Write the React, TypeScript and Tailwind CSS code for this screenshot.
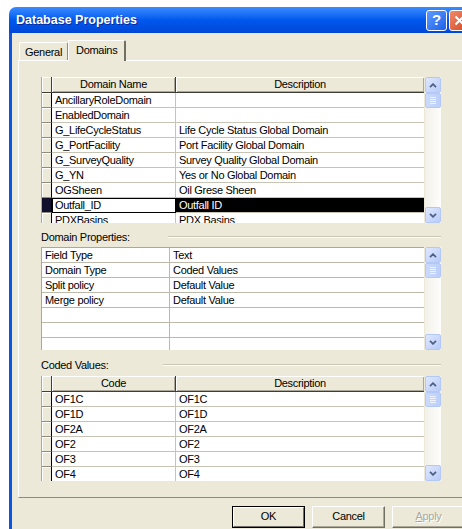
import React from 'react'

type Row = [string, string]

const DOMAINS: Row[] = [
  ['AncillaryRoleDomain', ''],
  ['EnabledDomain', ''],
  ['G_LifeCycleStatus', 'Life Cycle Status Global Domain'],
  ['G_PortFacility', 'Port Facility Global Domain'],
  ['G_SurveyQuality', 'Survey Quality Global Domain'],
  ['G_YN', 'Yes or No Global Domain'],
  ['OGSheen', 'Oil Grese Sheen'],
  ['Outfall_ID', 'Outfall ID'],
  ['PDXBasins', 'PDX Basins'],
]

const PROPS: Row[] = [
  ['Field Type', 'Text'],
  ['Domain Type', 'Coded Values'],
  ['Split policy', 'Default Value'],
  ['Merge policy', 'Default Value'],
  ['', ''],
  ['', ''],
  ['', ''],
]

const CODES: Row[] = [
  ['OF1C', 'OF1C'],
  ['OF1D', 'OF1D'],
  ['OF2A', 'OF2A'],
  ['OF2', 'OF2'],
  ['OF3', 'OF3'],
  ['OF4', 'OF4'],
]

function Chevron({ up }: { up?: boolean }) {
  return (
    <svg width="8" height="5" viewBox="0 0 8 5">
      <polyline
        points={up ? '1,4.2 4,1.2 7,4.2' : '1,0.8 4,3.8 7,0.8'}
        fill="none"
        stroke="#4d6185"
        strokeWidth="1.8"
      />
    </svg>
  )
}

function ArrowBtn({ up }: { up?: boolean }) {
  return (
    <div className="flex h-[16px] w-[16px] shrink-0 items-center justify-center rounded-[2px] border border-[#b4c8f6] bg-gradient-to-br from-[#dfe8fe] to-[#b8cbf8]">
      <Chevron up={up} />
    </div>
  )
}

function Thumb() {
  return (
    <div className="flex h-[15px] w-[16px] shrink-0 flex-col items-center justify-center gap-[1px] rounded-[2px] border border-[#b4c8f6] bg-gradient-to-r from-[#cbdafc] to-[#bccff9]">
      {[0, 1, 2, 3].map((i) => (
        <div key={i} className="h-px w-[6px] bg-[#eef3fe]" />
      ))}
    </div>
  )
}

function ScrollBar() {
  return (
    <div className="ml-[1px] flex w-[16px] shrink-0 flex-col bg-gradient-to-r from-[#f2f0e8] to-[#fefefd]">
      <ArrowBtn up />
      <Thumb />
      <div className="flex-1" />
      <ArrowBtn />
    </div>
  )
}

function HeaderRow({ first, second }: { first: string; second: string }) {
  return (
    <div className="grid h-[16px] shrink-0 grid-cols-[10px_124px_249px]">
      <div className="border-r border-b border-[#3e3d38] bg-[#ece9d8] shadow-[inset_1px_1px_0_#fff]" />
      <div className="border-r border-b border-[#3e3d38] bg-[#ece9d8] text-center leading-[15px] shadow-[inset_1px_1px_0_#fff,inset_-1px_-1px_0_#aca899]">
        {first}
      </div>
      <div className="border-r border-b border-[#3e3d38] bg-[#ece9d8] text-center leading-[15px] shadow-[inset_1px_1px_0_#fff,inset_-1px_-1px_0_#aca899]">
        {second}
      </div>
    </div>
  )
}

function KeyedRow({ row, selected }: { row: Row; selected?: boolean }) {
  return (
    <div className="grid h-[15px] shrink-0 grid-cols-[10px_124px_249px]">
      <div
        className={
          selected
            ? 'border-r border-b border-r-black border-b-[#8e8b7e] bg-[#10102c]'
            : 'border-r border-b border-r-black border-b-[#8e8b7e] bg-[#ece9d8] shadow-[inset_1px_1px_0_#fff]'
        }
      />
      {selected ? (
        <div className="overflow-hidden border border-black bg-white pl-[2px] leading-[13px] whitespace-nowrap">
          {row[0]}
        </div>
      ) : (
        <div className="overflow-hidden border-r border-b border-[#c7c4b6] bg-white pl-[3px] leading-[14px] whitespace-nowrap">
          {row[0]}
        </div>
      )}
      <div
        className={
          selected
            ? 'overflow-hidden border-b border-[#c7c4b6] bg-black pl-[3px] leading-[14px] whitespace-nowrap text-white'
            : 'overflow-hidden border-r border-b border-[#c7c4b6] bg-white pl-[3px] leading-[14px] whitespace-nowrap'
        }
      >
        {row[1]}
      </div>
    </div>
  )
}

function GroupLabel({ label, w, h }: { label: string; w: string; h: string }) {
  return (
    <div className={`flex ${h} w-[400px] items-center pt-[3px]`}>
      <span className={`${w} shrink-0 leading-[14px]`}>{label}</span>
      <div className="h-[2px] flex-1 border-t border-b border-t-[#c9c6b6] border-b-white" />
    </div>
  )
}

function XpButton({ label, isDefault, disabled }: { label: string; isDefault?: boolean; disabled?: boolean }) {
  if (isDefault) {
    return (
      <div className="h-[22px] w-[73px] shrink-0 border border-black">
        <div className="flex h-full items-center justify-center border-t border-l border-t-white border-l-white border-r border-b border-r-[#716f64] border-b-[#716f64] bg-[#ece9d8] pb-[1px]">
          {label}
        </div>
      </div>
    )
  }
  return (
    <div className="flex h-[22px] w-[73px] shrink-0 items-center justify-center border-t border-l border-t-white border-l-white border-r border-b border-r-[#716f64] border-b-[#716f64] bg-[#ece9d8] pb-[1px] shadow-[inset_-1px_-1px_0_#aca899]">
      {disabled ? (
        <span className="text-[#aca899] [text-shadow:1px_1px_0_#fff]">
          <span className="underline">A</span>pply
        </span>
      ) : (
        label
      )}
    </div>
  )
}

export default function App() {
  return (
    <div className="h-[529px] w-[462px] overflow-hidden bg-white pt-[7px] pl-[9px] font-['Liberation_Sans',Arial,sans-serif] text-[11px] tracking-[-0.3px] text-black">
      <div className="w-[480px] overflow-hidden rounded-t-[7px]">
        {/* title bar */}
        <div className="flex h-[26px] items-center bg-gradient-to-b from-[#3a8cff] via-[#0058ee] to-[#0047d8] pl-[7px]">
          <span className="flex-1 text-[12.5px] font-bold tracking-normal text-white [text-shadow:1px_1px_0_#0a2a9a]">
            Database Properties
          </span>
          <div className="mr-[2px] flex h-[21px] w-[21px] items-center justify-center rounded-[3px] border border-white bg-gradient-to-br from-[#5d9bff] to-[#1c5fe8] text-[15px] font-bold text-white">
            ?
          </div>
          <div className="mr-[19px] flex h-[21px] w-[21px] items-center justify-center rounded-[3px] border border-white bg-gradient-to-br from-[#f08a6a] to-[#d2441c]">
            <svg width="11" height="11" viewBox="0 0 11 11">
              <path d="M1.5 1.5 L9.5 9.5 M9.5 1.5 L1.5 9.5" stroke="#fff" strokeWidth="2" />
            </svg>
          </div>
        </div>

        {/* body */}
        <div className="h-[496px] border-l-[3px] border-[#0b55e2] bg-[#ece9d8] pl-[6px]">
          {/* tabs */}
          <div className="flex items-end pt-[7px]">
            <div className="mb-0 ml-[1px] flex h-[18px] items-center rounded-t-[2px] border-t border-l border-t-white border-l-white border-r border-r-[#8e8b7e] px-[5px] pt-[1px]">
              General
            </div>
            <div className="relative z-10 -mb-px flex h-[21px] items-center rounded-t-[2px] border-t border-l border-t-white border-l-white border-r-2 border-r-[#716f64] bg-[#ece9d8] px-[7px] pb-[2px]">
              Domains
            </div>
          </div>

          {/* tab page */}
          <div className="h-[438px] border-t border-l border-b border-t-white border-l-white border-b-[#8e8b7e] pt-[16px] pl-[22px]">
            {/* domain list */}
            <div className="flex h-[146px] w-[400px]">
              <div className="flex w-[383px] flex-col overflow-hidden border-l border-[#aca899]">
                <HeaderRow first="Domain Name" second="Description" />
                {DOMAINS.map((r, i) => (
                  <KeyedRow key={r[0]} row={r} selected={i === 7} />
                ))}
              </div>
              <ScrollBar />
            </div>

            <GroupLabel label="Domain Properties:" w="w-[127px]" h="h-[24px]" />

            <div className="flex h-[103px] w-[400px]">
              <div className="flex w-[384px] flex-col overflow-hidden border-t border-l border-[#aca899]">
                {PROPS.map((r, i) => (
                  <div key={i} className="grid h-[15px] shrink-0 grid-cols-[128px_256px]">
                    <div className="overflow-hidden border-r border-b border-[#bdb9aa] bg-white pl-[3px] leading-[14px] whitespace-nowrap">
                      {r[0]}
                    </div>
                    <div className="overflow-hidden border-r border-b border-[#bdb9aa] bg-white pl-[3px] leading-[14px] whitespace-nowrap">
                      {r[1]}
                    </div>
                  </div>
                ))}
              </div>
              <ScrollBar />
            </div>

            <GroupLabel label="Coded Values:" w="w-[122px]" h="h-[26px]" />

            <div className="flex h-[105px] w-[400px]">
              <div className="flex w-[383px] flex-col overflow-hidden border-l border-[#aca899]">
                <HeaderRow first="Code" second="Description" />
                {CODES.map((r) => (
                  <KeyedRow key={r[0]} row={r} />
                ))}
              </div>
              <ScrollBar />
            </div>
          </div>

          {/* dialog buttons */}
          <div className="flex gap-[7px] pt-[8px] pl-[214px]">
            <XpButton label="OK" isDefault />
            <XpButton label="Cancel" />
            <XpButton label="Apply" disabled />
          </div>
        </div>
      </div>
    </div>
  )
}
